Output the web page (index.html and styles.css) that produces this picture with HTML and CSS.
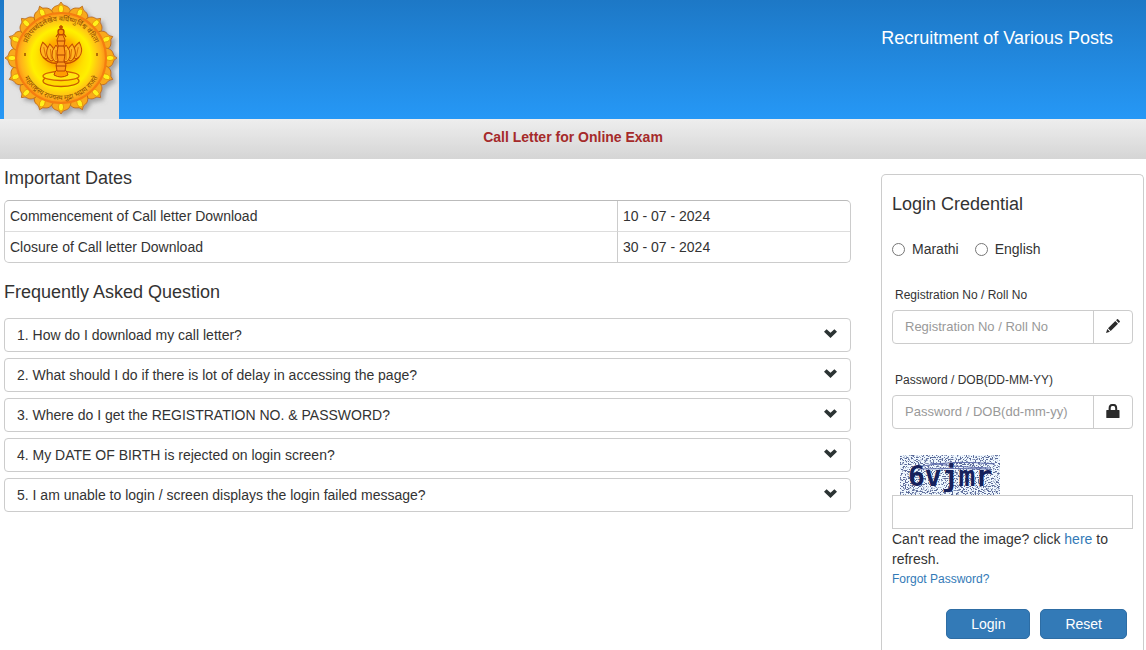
FILE: index.html
```html
<!DOCTYPE html>
<html lang="en">
<head>
<meta charset="utf-8">
<title>Call Letter for Online Exam</title>
<link rel="stylesheet" href="styles.css">
</head>
<body>
<svg class="defs" width="0" height="0" aria-hidden="true">
  <defs>
    <symbol id="chevron" viewBox="0 0 13 9">
      <path d="M2.6.2 6.5 3.700 10.400.2 13 2.700 6.500 9 0 2.700Z"/>
    </symbol>
  </defs>
</svg>
<header class="banner">
  <svg class="emblem" viewBox="0 0 115 119" role="img" aria-label="State seal">
    <defs>
      <radialGradient id="disc">
        <stop offset="0" stop-color="#ffb000"/>
        <stop offset=".4" stop-color="#ffd800"/>
        <stop offset=".66" stop-color="#fff000"/>
        <stop offset=".78" stop-color="#ffcf10"/>
        <stop offset=".9" stop-color="#ffb21a"/>
        <stop offset="1" stop-color="#fb8f14"/>
      </radialGradient>
      <radialGradient id="glow">
        <stop offset="0" stop-color="#ff7a00"/>
        <stop offset=".6" stop-color="#ff9a00" stop-opacity=".6"/>
        <stop offset="1" stop-color="#ffe000" stop-opacity="0"/>
      </radialGradient>
      <filter id="shade" x="-20%" y="-20%" width="140%" height="140%">
        <feDropShadow dx="3" dy="3" stdDeviation="2" flood-color="#777" flood-opacity=".6"/>
      </filter>
      <g id="lobe">
        <path d="M-10-43C-10-48-8-51-5-52Q-2-52 0-56 2-52 5-52C8-51 10-48 10-43Z" fill="#f9a81c" stroke="#b8660c" stroke-width=".8"/>
        <ellipse cy="-49" rx="2.6" ry="4" fill="#fff01e" stroke="#e08a00" stroke-width=".7"/>
      </g>
      <path id="arc-top" d="M20 58a37 37 0 0 1 74 0"/>
      <path id="arc-bottom" d="M16 59a41 41 0 0 0 82 0"/>
      <g id="lamp">
        <path d="M-4 0Q-5-5 0-11 5-5 4 0 3 5 0 6-3 5-4 0Z" fill="#ffb320" stroke="#c24d00" stroke-width="1"/>
        <path d="M0-6V4" stroke="#e27400" stroke-width="1"/>
      </g>
    </defs>
    <rect width="115" height="119" fill="#e3e3e3"/>
    <g filter="url(#shade)">
      <g transform="translate(57 58)">
        <use href="#lobe"/><use href="#lobe" transform="rotate(22.5)"/>
        <use href="#lobe" transform="rotate(45)"/><use href="#lobe" transform="rotate(67.5)"/>
        <use href="#lobe" transform="rotate(90)"/><use href="#lobe" transform="rotate(112.5)"/>
        <use href="#lobe" transform="rotate(135)"/><use href="#lobe" transform="rotate(157.5)"/>
        <use href="#lobe" transform="rotate(180)"/><use href="#lobe" transform="rotate(202.5)"/>
        <use href="#lobe" transform="rotate(225)"/><use href="#lobe" transform="rotate(247.5)"/>
        <use href="#lobe" transform="rotate(270)"/><use href="#lobe" transform="rotate(292.5)"/>
        <use href="#lobe" transform="rotate(315)"/><use href="#lobe" transform="rotate(337.5)"/>
      </g>
    </g>
    <circle cx="57" cy="58" r="45" fill="url(#disc)" stroke="#f47d10" stroke-width="2"/>
    <g class="seal-text">
      <text><textPath href="#arc-top" startOffset="50%">प्रतिपच्चंद्रलेखेव वर्धिष्णुर्विश्व वंदिता</textPath></text>
      <text><textPath href="#arc-bottom" startOffset="50%">महाराष्ट्रस्य राज्यस्य मुद्रा भद्राय राजते</textPath></text>
    </g>
    <path d="M21 53v3M93 53v3" stroke="#9a5200" stroke-width="1.500"/>
    <ellipse cx="57" cy="53" rx="26" ry="24" fill="url(#glow)"/>
    <g transform="translate(57 55)">
      <use href="#lamp" transform="translate(-16 -2) rotate(-12)"/>
      <use href="#lamp" transform="translate(16 -2) rotate(12)"/>
      <use href="#lamp" transform="translate(-10 0) rotate(-6)"/>
      <use href="#lamp" transform="translate(10 0) rotate(6)"/>
      <use href="#lamp" transform="translate(-5 1)"/>
      <use href="#lamp" transform="translate(5 1)"/>
      <path d="M-18 2Q-10 11 0 7 10 11 18 2" fill="none" stroke="#c24d00" stroke-width="1.300"/>
    </g>
    <ellipse cx="57" cy="81" rx="18" ry="5.500" fill="#ffd800" stroke="#c85a00" stroke-width="1.300"/>
    <ellipse cx="57" cy="76" rx="18" ry="4.500" fill="#ffe610" stroke="#d46200" stroke-width="1.300"/>
    <path d="M50 75q1-6 7-6t7 6q-7 4-14 0Z" fill="#ff9d00" stroke="#bd4600"/>
    <path d="M57 25v4M55 27h4M54 34l-2 3M60 34l2 3" stroke="#b84300" stroke-width="1.300"/>
    <circle cx="57" cy="32" r="3" fill="#ff9a00" stroke="#b84300" stroke-width="1.300"/>
    <path d="M55 35h4l2 5-1 6 1 8-1 7 2 4-1 6h-8l-1-6 2-4-1-7 1-8-1-6Z" fill="#ff9b1a" stroke="#bd4600"/>
    <path d="M53 41h8M54 46h6M53 55h8M53 62h8M52 66h10" stroke="#a93c00"/>
  </svg>
  <h1 class="banner-title">Recruitment of Various Posts</h1>
</header>
<div class="subtitle">Call Letter for Online Exam</div>

<main class="content">
  <div class="info">
    <h2>Important Dates</h2>
    <table class="dates">
      <tr><td>Commencement of Call letter Download</td><td>10 - 07 - 2024</td></tr>
      <tr><td>Closure of Call letter Download</td><td>30 - 07 - 2024</td></tr>
    </table>
    <h2>Frequently Asked Question</h2>
    <div class="faq">
      <button type="button"><span>1. How do I download my call letter?</span><svg><use href="#chevron"/></svg></button>
      <button type="button"><span>2. What should I do if there is lot of delay in accessing the page?</span><svg><use href="#chevron"/></svg></button>
      <button type="button"><span>3. Where do I get the REGISTRATION NO. &amp; PASSWORD?</span><svg><use href="#chevron"/></svg></button>
      <button type="button"><span>4. My DATE OF BIRTH is rejected on login screen?</span><svg><use href="#chevron"/></svg></button>
      <button type="button"><span>5. I am unable to login / screen displays the login failed message?</span><svg><use href="#chevron"/></svg></button>
    </div>
  </div>

  <form class="login">
    <h2>Login Credential</h2>
    <div class="languages">
      <label><input type="radio" name="lang" value="mr">Marathi</label>
      <label><input type="radio" name="lang" value="en">English</label>
    </div>
    <div class="field">
      <label for="regno">Registration No / Roll No</label>
      <div class="input-group">
        <input id="regno" type="text" placeholder="Registration No / Roll No">
        <span class="addon">
          <svg viewBox="0 0 14 14" aria-hidden="true"><path d="M0 14 1.300 10.100 3.900 12.700ZM2 9.300 9.300 2 12 4.700 4.700 12ZM10.100 1.200 11 .3Q11.500-.2 12 .3L13.700 2Q14.200 2.500 13.700 3L12.800 3.900Z"/></svg>
        </span>
      </div>
    </div>
    <div class="field">
      <label for="password">Password / DOB(DD-MM-YY)</label>
      <div class="input-group">
        <input id="password" type="password" placeholder="Password / DOB(dd-mm-yy)">
        <span class="addon">
          <svg viewBox="0 0 14 14" aria-hidden="true"><path fill-rule="evenodd" d="M.8 6H2.600V4.500Q2.600 0 6 0H8Q11.200 0 11.200 4.500V6H13Q13.500 6 13.500 6.500V13.500Q13.500 14 13 14H.8Q.3 14 .3 13.500V6.500Q.3 6 .8 6ZM4.700 6H9.200V4Q9.200 2 7.500 2H6.300Q4.700 2 4.700 4Z"/></svg>
        </span>
      </div>
    </div>
    <svg class="captcha" viewBox="0 0 100 40" role="img" aria-label="Captcha image">
      <defs>
        <filter id="noise" x="0" y="0" width="100%" height="100%" color-interpolation-filters="sRGB">
          <feTurbulence type="fractalNoise" baseFrequency=".6 .85" numOctaves="2" seed="7"/>
          <feColorMatrix values="0 0 0 0 .36  0 0 0 0 .42  0 0 0 0 .6  10 0 0 0 -5.1"/>
        </filter>
      </defs>
      <rect width="100" height="40" fill="#f0f8ff"/>
      <rect width="100" height="40" filter="url(#noise)"/>
      <path d="M23 11q30-6 72-2M20 14q35-1 68 0M30 8q25 4 60 5" fill="none" stroke="#626fae" stroke-width="1"/>
      <text class="captcha-text" x="8" y="31">6vjmr</text>
    </svg>
    <input class="captcha-input" type="text" aria-label="Captcha text">
    <p class="refresh">Can't read the image? click <a href="#">here</a> to refresh.</p>
    <a class="forgot" href="#">Forgot Password?</a>
    <div class="actions">
      <button type="submit">Login</button>
      <button type="reset">Reset</button>
    </div>
  </form>
</main>
</body>
</html>
```
FILE: styles.css
```css
* { box-sizing: border-box; }

body {
  display: flex;
  flex-direction: column;
  min-height: 100vh;
  margin: 0;
  background: #fff;
  color: #333;
  font: 14px/20px "Liberation Sans", Arial, sans-serif;
}

button, input { font: inherit; color: inherit; }
a { color: #337ab7; text-decoration: none; }
h1, h2 { margin: 0; font-size: 18px; font-weight: 400; line-height: 20px; }
.defs { position: absolute; }

.banner {
  display: flex;
  align-items: flex-start;
  justify-content: space-between;
  padding: 0 33px 0 4px;
  background: linear-gradient(#1d78c6, #2698f6);
}
.emblem { width: 115px; height: 119px; }
.seal-text {
  fill: #8a4a00;
  font-family: "Noto Sans Devanagari", "Noto Sans", sans-serif;
  font-size: 7px;
  text-anchor: middle;
}
.banner-title { margin-top: 28px; color: #fff; }

.subtitle {
  padding: 8px 0 12px;
  background: linear-gradient(#eee, #d5d5d5);
  color: #a52a2a;
  font-weight: 700;
  text-align: center;
}

.content {
  flex: 1;
  display: grid;
  grid-template-columns: 847fr 263fr;
  gap: 30px;
  padding: 0 2px 0 4px;
}

.info { padding-top: 9px; }
.dates {
  width: 100%;
  margin: 12px 0 19px;
  border: 1px solid #ccc;
  border-top: 1px solid #bbb;
  border-radius: 5px;
  border-spacing: 0;
}
.dates td { padding: 5px; }
.dates td:last-child { width: 233px; border-left: 1px solid #ccc; }
.dates tr + tr td { border-top: 1px solid #ddd; }

.faq { display: grid; gap: 6px; margin-top: 16px; }
.faq button {
  display: flex;
  align-items: center;
  justify-content: space-between;
  padding: 6px 13px 6px 12px;
  border: 1px solid #ccc;
  border-radius: 4px;
  background: #fff;
  text-align: left;
}
.faq svg { width: 13px; height: 9px; margin-bottom: 4px; fill: #2b3333; }

.login {
  display: flex;
  flex-direction: column;
  margin-top: 15px;
  padding: 19px 10px 11px;
  border: 1px solid #ccc;
  border-bottom: 0;
  border-radius: 5px 5px 0 0;
}
.languages { display: flex; gap: 16px; margin: 25px 0 26px; }
.languages label { display: flex; align-items: center; gap: 7px; }
.languages input { width: 13px; height: 13px; margin: 0; }

.field { margin-bottom: 26px; }
.field label { display: block; margin-bottom: 5px; padding-left: 3px; font-size: 12px; }
.input-group { display: flex; height: 34px; border: 1px solid #ccc; border-radius: 4px; }
.input-group input {
  flex: 1;
  min-width: 0;
  padding: 0 12px;
  border: 0;
  background: none;
  font-size: 13px;
}
.input-group input::placeholder { color: #999; opacity: 1; }
.addon {
  display: grid;
  place-items: center;
  width: 39px;
  padding-bottom: 2px;
  border-left: 1px solid #ccc;
}
.addon svg { width: 14px; height: 14px; fill: #2b2b2b; }

.captcha { width: 100px; height: 40px; margin-left: 8px; }
.captcha-text { fill: #16215c; font: bold 28px "DejaVu Sans Mono", monospace; }
.captcha-input { height: 34px; padding: 0 12px; border: 1px solid #ccc; }
.refresh { margin: 0; }
.forgot { font-size: 12px; }

.actions { display: flex; justify-content: flex-end; gap: 10px; margin-top: 20px; padding-right: 6px; }
.actions button {
  padding: 4px 24px;
  border: 1px solid #2e6da4;
  border-radius: 5px;
  background: #337ab7;
  color: #fff;
}
```
